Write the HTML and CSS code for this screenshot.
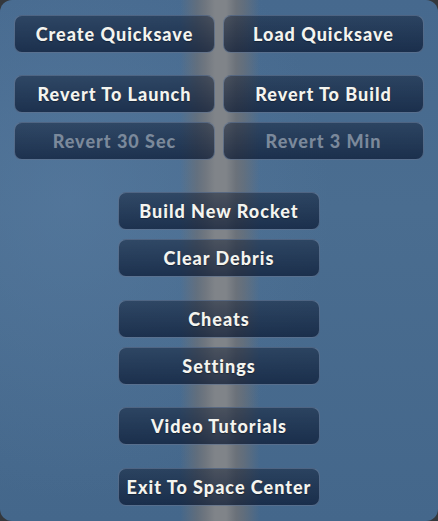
FILE: index.html
```html
<!DOCTYPE html>
<html>
<head>
<meta charset="utf-8">
<link rel="stylesheet" href="styles.css">
</head>
<body>
<div class="panel">
  <div class="grid g1">
    <button class="btn">Create Quicksave</button>
    <button class="btn">Load Quicksave</button>
  </div>
  <div class="grid g2">
    <button class="btn">Revert To Launch</button>
    <button class="btn">Revert To Build</button>
    <button class="btn disabled">Revert 30 Sec</button>
    <button class="btn disabled">Revert 3 Min</button>
  </div>
  <div class="col g3">
    <button class="btn">Build New Rocket</button>
    <button class="btn">Clear Debris</button>
  </div>
  <div class="col g4">
    <button class="btn">Cheats</button>
    <button class="btn">Settings</button>
  </div>
  <div class="col g5">
    <button class="btn">Video Tutorials</button>
  </div>
  <div class="col g6">
    <button class="btn">Exit To Space Center</button>
  </div>
</div>
</body>
</html>
```
FILE: styles.css
```css
html, body {
  margin: 0;
  padding: 0;
  background: #34383d;
}
.panel {
  width: 438px;
  height: 521px;
  box-sizing: border-box;
  border-radius: 12px;
  padding: 15px 14px 0;
  display: flex;
  flex-direction: column;
  background:
    linear-gradient(to right,
      rgba(118,122,128,0) 0,
      rgba(118,122,128,0) 180px,
      rgba(108,112,118,0.7) 197px,
      rgba(116,120,126,0.92) 206px,
      rgba(128,132,137,1) 215px,
      rgba(128,132,137,1) 226px,
      rgba(110,114,120,0.92) 236px,
      rgba(108,112,118,0.7) 244px,
      rgba(118,122,128,0) 260px),
    radial-gradient(ellipse 260px 300px at 70px 200px, rgba(90,126,164,0.5), rgba(90,126,164,0) 100%),
    linear-gradient(to bottom, #46698e 0, #4a6d90 40%, #44678b 100%);
}
.grid {
  display: grid;
  grid-template-columns: 1fr 1fr;
  column-gap: 8px;
  row-gap: 9px;
}
.col {
  display: flex;
  flex-direction: column;
  align-items: center;
  gap: 9px;
}
.g2 { margin-top: 22px; }
.g3 { margin-top: 32px; }
.g4 { margin-top: 23px; }
.g5 { margin-top: 22px; }
.g6 { margin-top: 23px; }
.col .btn { width: 202px; }
.btn {
  height: 38px;
  box-sizing: border-box;
  margin: 0;
  padding: 0;
  border: 1px solid rgba(150,175,205,0.42);
  border-radius: 8px;
  background: linear-gradient(to bottom, rgba(14,26,48,0.48) 0, rgba(8,22,48,0.7) 100%);
  color: #f4f4ef;
  font-family: "Lato", "DejaVu Sans", sans-serif;
  font-weight: 900;
  font-size: 18px;
  letter-spacing: 1px;
  text-align: center;
  text-shadow: 0 1px 1px rgba(0,0,0,0.35);
  cursor: pointer;
}
.btn.disabled {
  color: #7b899b;
  text-shadow: none;
}
```
